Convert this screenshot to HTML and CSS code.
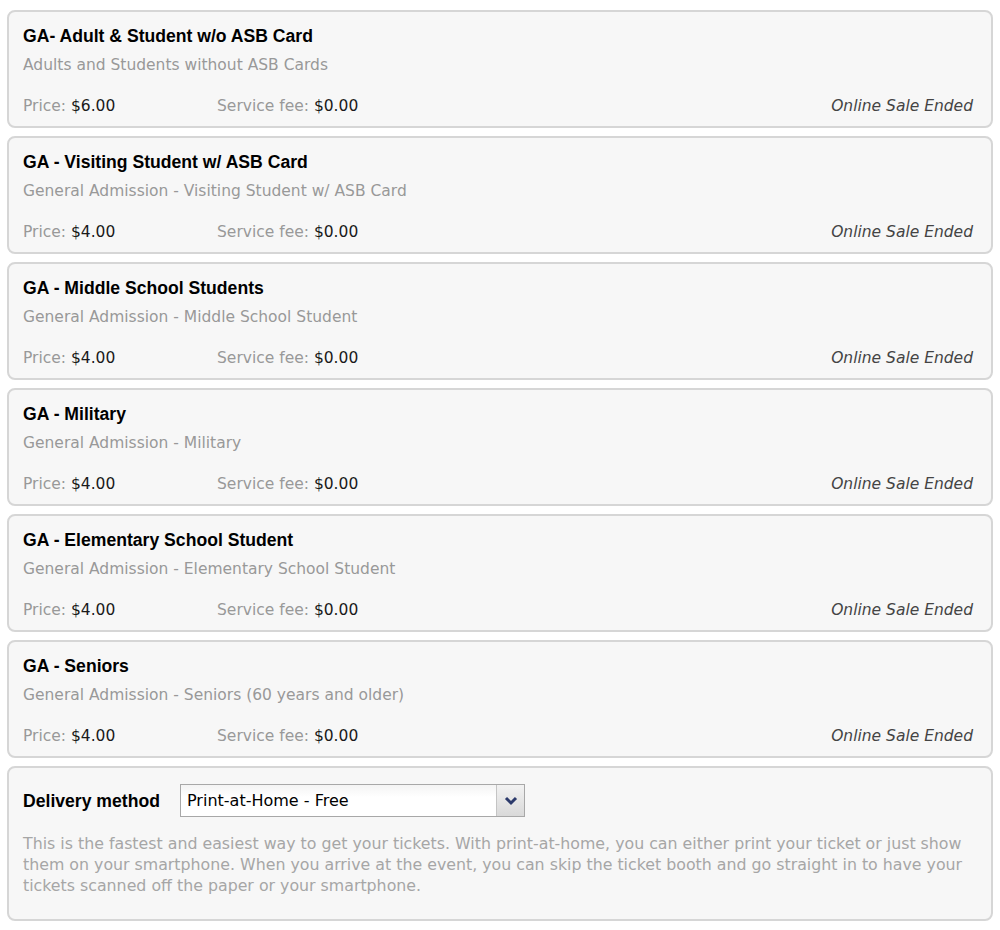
FILE: index.html
```html
<!DOCTYPE html>
<html>

<head>
    <title>tickets</title>
    <link rel="stylesheet" href="styles.css">
</head>

<body>
    <div class="TicketList">
        <div class="ticket">
            <div class="ticketName">GA- Adult &amp; Student w/o ASB Card</div>
            <div class="ticketDesc">Adults and Students without ASB Cards</div>
            <div class="ticketRow">
                <span class="price"><span class="label">Price:</span> $6.00</span>
                <span class="fee"><span class="label">Service fee:</span> $0.00</span>
                <span class="status">Online Sale Ended</span>
            </div>
        </div>
        <div class="ticket">
            <div class="ticketName">GA - Visiting Student w/ ASB Card</div>
            <div class="ticketDesc">General Admission - Visiting Student w/ ASB Card</div>
            <div class="ticketRow">
                <span class="price"><span class="label">Price:</span> $4.00</span>
                <span class="fee"><span class="label">Service fee:</span> $0.00</span>
                <span class="status">Online Sale Ended</span>
            </div>
        </div>
        <div class="ticket">
            <div class="ticketName">GA - Middle School Students</div>
            <div class="ticketDesc">General Admission - Middle School Student</div>
            <div class="ticketRow">
                <span class="price"><span class="label">Price:</span> $4.00</span>
                <span class="fee"><span class="label">Service fee:</span> $0.00</span>
                <span class="status">Online Sale Ended</span>
            </div>
        </div>
        <div class="ticket">
            <div class="ticketName">GA - Military</div>
            <div class="ticketDesc">General Admission - Military</div>
            <div class="ticketRow">
                <span class="price"><span class="label">Price:</span> $4.00</span>
                <span class="fee"><span class="label">Service fee:</span> $0.00</span>
                <span class="status">Online Sale Ended</span>
            </div>
        </div>
        <div class="ticket">
            <div class="ticketName">GA - Elementary School Student</div>
            <div class="ticketDesc">General Admission - Elementary School Student</div>
            <div class="ticketRow">
                <span class="price"><span class="label">Price:</span> $4.00</span>
                <span class="fee"><span class="label">Service fee:</span> $0.00</span>
                <span class="status">Online Sale Ended</span>
            </div>
        </div>
        <div class="ticket">
            <div class="ticketName">GA - Seniors</div>
            <div class="ticketDesc">General Admission - Seniors (60 years and older)</div>
            <div class="ticketRow">
                <span class="price"><span class="label">Price:</span> $4.00</span>
                <span class="fee"><span class="label">Service fee:</span> $0.00</span>
                <span class="status">Online Sale Ended</span>
            </div>
        </div>

        <div class="ticket delivery">
            <div class="deliveryRow">
                <span class="ticketName">Delivery method</span>
                <div class="selectBox">
                    <span class="selectText">Print-at-Home - Free</span>
                    <span class="selectArrow">
                        <svg width="14" height="10" viewBox="0 0 14 10">
                            <path d="M2 2 L7 7 L12 2" fill="none" stroke="#2c3a6b" stroke-width="3"/>
                        </svg>
                    </span>
                </div>
            </div>
            <p class="deliveryText">This is the fastest and easiest way to get your tickets. With print-at-home, you can either print your ticket or just show them on your smartphone. When you arrive at the event, you can skip the ticket booth and go straight in to have your tickets scanned off the paper or your smartphone.</p>
        </div>
    </div>
</body>

</html>
```

FILE: styles.css
```css
body {
    margin: 0;
    background-color: #fff;
    font-family: "DejaVu Sans", Verdana, sans-serif;
}

.TicketList {
    padding: 10px 7px 0 7px;
    display: flex;
    flex-direction: column;
    gap: 8px;
}

.ticket {
    background-color: #f7f7f7;
    border: 2px solid #d6d6d6;
    border-radius: 8px;
    height: 114px;
    padding: 0 18px 0 14px;
    display: flex;
    flex-direction: column;
}

.ticketName {
    font-family: "Liberation Sans", Arial, sans-serif;
    font-weight: bold;
    font-size: 17.6px;
    color: #000;
    line-height: 20px;
    margin-top: 14px;
}

.ticketDesc {
    font-size: 15.5px;
    color: #999;
    line-height: 20px;
    margin-top: 9px;
}

.ticketRow {
    display: flex;
    font-size: 15.5px;
    line-height: 20px;
    margin-top: 21px;
    color: #1a1a1a;
}

.label {
    color: #999;
}

.price {
    width: 194px;
}

.status {
    margin-left: auto;
    font-style: italic;
    color: #444;
}

.delivery {
    height: 151px;
}

.deliveryRow {
    display: flex;
    align-items: center;
    margin-top: 16px;
}

.deliveryRow .ticketName {
    margin-top: 0;
    width: 157px;
}

.selectBox {
    display: flex;
    width: 343px;
    height: 31px;
    border: 1px solid #a8a8a8;
    background: linear-gradient(#f4f4f4, #ffffff 40%);
}

.selectText {
    flex: 1;
    font-size: 16px;
    line-height: 31px;
    padding-left: 6px;
    color: #000;
}

.selectArrow {
    width: 27px;
    border-left: 1px solid #c4c4c4;
    background: linear-gradient(#f2f2f2, #d9d9d9);
    display: flex;
    align-items: center;
    justify-content: center;
}

.deliveryText {
    margin: 16px 0 0 0;
    font-size: 15.8px;
    line-height: 21px;
    color: #a6a6a6;
}
```
